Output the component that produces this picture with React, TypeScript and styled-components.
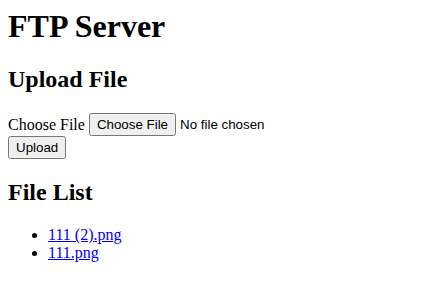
import React from 'react';
import styled, { createGlobalStyle } from 'styled-components';

const GlobalStyle = createGlobalStyle`
  body {
    margin: 8px;
    font-family: "Liberation Serif", "Times New Roman", serif;
    font-size: 16px;
    color: #000;
    background: #fff;
  }
`;

const Title = styled.h1`
  font-size: 32px;
  margin: 0 0 21.44px;
  font-weight: bold;
`;

const Section = styled.h2`
  font-size: 24px;
  margin: 19.92px 0;
  font-weight: bold;
`;

const Form = styled.form`
  margin: 0;
`;

const Row = styled.div`
  display: flex;
  align-items: center;
  gap: 4px;
`;

const FileInput = styled.input`
  font-family: "Liberation Sans", Arial, sans-serif;
  font-size: 13.333px;

  &::file-selector-button {
    font: inherit;
    padding: 2px 6px;
    margin-right: 4px;
  }
`;

const Button = styled.button`
  font-family: "Liberation Sans", Arial, sans-serif;
  font-size: 13.333px;
  padding: 2px 6px;
`;

const List = styled.ul`
  margin: 16px 0;
  padding-left: 40px;
`;

const FileLink = styled.a`
  color: #0000ee;
  text-decoration: underline;
`;

const files = ['111 (2).png', '111.png'];

const App = () => (
  <>
    <GlobalStyle />
    <Title>FTP Server</Title>
    <Section>Upload File</Section>
    <Form onSubmit={(e) => e.preventDefault()}>
      <Row>
        <label htmlFor="file">Choose File</label>
        <FileInput id="file" type="file" />
      </Row>
      <Button type="submit">Upload</Button>
    </Form>
    <Section>File List</Section>
    <List>
      {files.map((f) => (
        <li key={f}>
          <FileLink href="#">{f}</FileLink>
        </li>
      ))}
    </List>
  </>
);

export default App;
